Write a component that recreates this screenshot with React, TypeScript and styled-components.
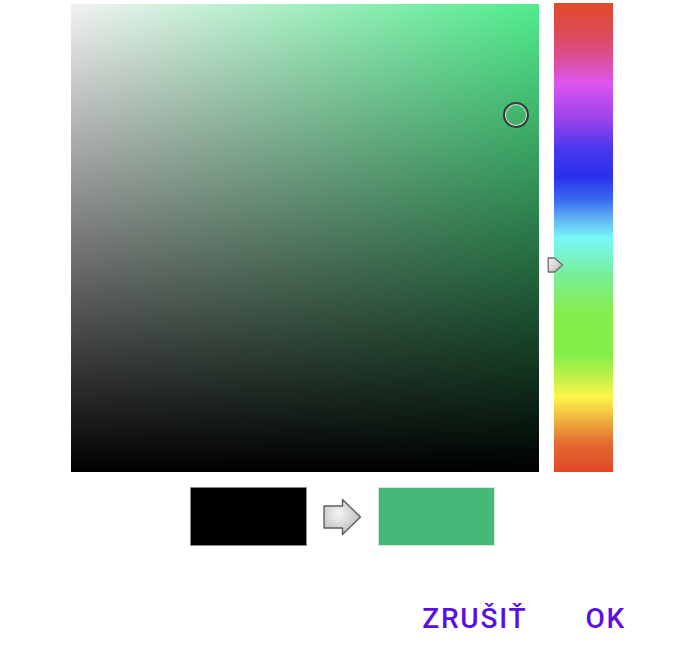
import React from "react";
import styled, { createGlobalStyle } from "styled-components";

const Global = createGlobalStyle`
  html, body { margin: 0; padding: 0; background: #ffffff; }
  body { font-family: Roboto, "Noto Sans", sans-serif; }
`;

const Page = styled.div`
  width: 678px;
  height: 662px;
  display: flex;
  flex-direction: column;
  box-sizing: border-box;
  padding-top: 4px;
`;

const PickerColumn = styled.div`
  margin-left: 71px;
  width: 542px;
  display: flex;
  flex-direction: column;
`;

const PickerRow = styled.div`
  display: flex;
  gap: 15px;
`;

const SVSquare = styled.div<{ $hue: string }>`
  position: relative;
  width: 468px;
  height: 468px;
  background: linear-gradient(to top, #000 0%, rgba(0, 0, 0, 0) 100%),
    linear-gradient(to right, #f2f2f2 0%, ${(p) => p.$hue} 100%);
`;

const Cursor = styled.div`
  position: absolute;
  width: 22px;
  height: 22px;
  border-radius: 50%;
  border: 2px solid #333a36;
  box-shadow: inset 0 0 0 1px #d8d8d8;
  transform: translate(-50%, -50%);
`;

const HueBar = styled.div`
  position: relative;
  width: 59px;
  height: 469px;
  margin-top: -1px;
  background: linear-gradient(
    to bottom,
    #e04a28 0%,
    #dd4a5c 7%,
    #db4f9c 12%,
    #dc55ee 17%,
    #9a42ec 25%,
    #4838ee 31%,
    #2a30ee 37%,
    #3a6af0 42%,
    #5eb2f4 46%,
    #78f8f8 50%,
    #78ee98 58%,
    #86ee4c 66%,
    #86ee4a 75%,
    #c4f048 80%,
    #fdf54a 84%,
    #eeb03e 89%,
    #e26a30 94%,
    #e04726 100%
  );
`;

const HueMarker = styled.svg`
  position: absolute;
  left: -7px;
  width: 17px;
  height: 16px;
  transform: translateY(-50%);
`;

const SwatchRow = styled.div`
  margin-top: 15px;
  display: flex;
  justify-content: center;
  align-items: center;
  gap: 16px;
`;

const Swatch = styled.div<{ $color: string }>`
  width: 117px;
  height: 59px;
  box-sizing: border-box;
  background: ${(p) => p.$color};
  border: 1px solid ${(p) => (p.$color === "#000000" ? "#8a8a8a" : "#cfe9da")};
`;

const Arrow = styled.svg`
  width: 39px;
  height: 38px;
`;

const ButtonBar = styled.div`
  margin-top: 52px;
  display: flex;
  justify-content: flex-end;
  gap: 34px;
  padding-right: 40px;
`;

const TextButton = styled.button`
  background: none;
  border: none;
  padding: 0 12px;
  height: 40px;
  font-family: Roboto, "Noto Sans", sans-serif;
  font-weight: 500;
  font-size: 28px;
  letter-spacing: 1.8px;
  color: #5a0ee6;
  cursor: pointer;
`;

export default function App() {
  const hue = "rgb(80, 236, 140)";
  const sat = 0.951;
  const val = 0.763;
  const hueY = 0.558;
  return (
    <>
      <Global />
      <Page>
        <PickerColumn>
          <PickerRow>
            <SVSquare $hue={hue}>
              <Cursor style={{ left: `${sat * 468}px`, top: `${(1 - val) * 468}px` }} />
            </SVSquare>
            <HueBar>
              <HueMarker viewBox="0 0 17 16" style={{ top: `${hueY * 468 + 1}px` }}>
                <defs>
                  <linearGradient id="hm" x1="0" y1="0" x2="1" y2="1">
                    <stop offset="0" stopColor="#f4f4f4" />
                    <stop offset="1" stopColor="#b8b8b8" />
                  </linearGradient>
                </defs>
                <path
                  d="M1.2 1 H7.5 L15.5 8 L7.5 15 H1.2 Z"
                  fill="url(#hm)"
                  stroke="#6a6a6a"
                  strokeWidth="1.3"
                  strokeLinejoin="round"
                />
              </HueMarker>
            </HueBar>
          </PickerRow>
          <SwatchRow>
            <Swatch $color="#000000" />
            <Arrow viewBox="0 0 39 38">
              <defs>
                <radialGradient id="ar" cx="0.4" cy="0.4" r="0.7">
                  <stop offset="0" stopColor="#f6f6f6" />
                  <stop offset="1" stopColor="#b4b4b4" />
                </radialGradient>
              </defs>
              <path
                d="M1 8 H19.5 V1.5 L37.5 19 L19.5 36.5 V30 H1 Z"
                fill="url(#ar)"
                stroke="#5e5e5e"
                strokeWidth="1.4"
                strokeLinejoin="round"
              />
            </Arrow>
            <Swatch $color="#45ba78" />
          </SwatchRow>
        </PickerColumn>
        <ButtonBar>
          <TextButton>ZRUŠIŤ</TextButton>
          <TextButton>OK</TextButton>
        </ButtonBar>
      </Page>
    </>
  );
}
